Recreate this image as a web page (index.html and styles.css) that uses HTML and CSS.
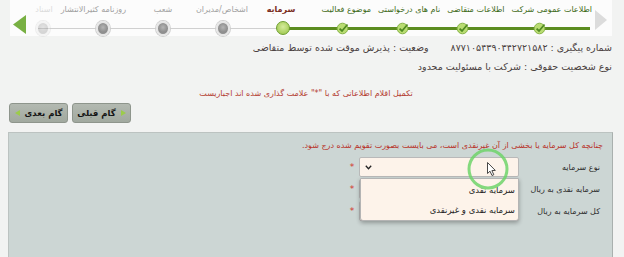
FILE: index.html
```html
<!DOCTYPE html>
<html lang="fa" dir="rtl">
<head>
<meta charset="utf-8">
<title>ثبت شرکت</title>
<link rel="stylesheet" href="styles.css">
</head>
<body>
<div class="wizard">
  <div class="step-labels">
    <span class="label done">اطلاعات عمومی شرکت</span>
    <span class="label done">اطلاعات متقاضی</span>
    <span class="label done">نام های درخواستی</span>
    <span class="label done">موضوع فعالیت</span>
    <div class="labels-rest">
      <span class="label current">سرمایه</span>
      <span class="label">اشخاص/مدیران</span>
      <span class="label">شعب</span>
      <span class="label">روزنامه کثیرالانتشار</span>
      <span class="label faded">اسناد</span>
    </div>
  </div>
  <div class="step-track">
    <span class="dot dot-check first"><svg width="14" height="14" viewBox="0 0 14 14"><circle cx="6.5" cy="7.5" r="5.3" fill="#b9dc72" stroke="#86b347" stroke-width="1"/><path d="M3.6 7.6 L6 10 L11.5 3.5" fill="none" stroke="#4f8a22" stroke-width="1.8"/></svg></span>
    <span class="dot dot-check"><svg width="14" height="14" viewBox="0 0 14 14"><circle cx="6.5" cy="7.5" r="5.3" fill="#b9dc72" stroke="#86b347" stroke-width="1"/><path d="M3.6 7.6 L6 10 L11.5 3.5" fill="none" stroke="#4f8a22" stroke-width="1.8"/></svg></span>
    <span class="dot dot-check"><svg width="14" height="14" viewBox="0 0 14 14"><circle cx="6.5" cy="7.5" r="5.3" fill="#b9dc72" stroke="#86b347" stroke-width="1"/><path d="M3.6 7.6 L6 10 L11.5 3.5" fill="none" stroke="#4f8a22" stroke-width="1.8"/></svg></span>
    <span class="dot dot-check"><svg width="14" height="14" viewBox="0 0 14 14"><circle cx="6.5" cy="7.5" r="5.3" fill="#b9dc72" stroke="#86b347" stroke-width="1"/><path d="M3.6 7.6 L6 10 L11.5 3.5" fill="none" stroke="#4f8a22" stroke-width="1.8"/></svg></span>
    <span class="dot dot-current"></span>
    <span class="dot dot-gray"></span>
    <span class="dot dot-gray"></span>
    <span class="dot dot-gray"></span>
    <span class="dot dot-gray faded"></span>
  </div>
  <div class="nav-next">
    <svg width="12" height="20" viewBox="0 0 12 20"><polygon points="0,0 12,10 0,20" fill="#dcdcdc"/></svg>
  </div>
  <div class="nav-prev">
    <svg width="13" height="19" viewBox="0 0 13 19"><polygon points="0,9.5 13,0 13,19" fill="#78b043"/></svg>
  </div>
</div>

<div class="info">
  <p class="info-line"><span>شماره پیگیری : ۸۷۷۱۰۵۴۳۹۰۳۴۲۷۲۱۵۸۲</span><span class="status">وضعیت : پذیرش موقت شده توسط متقاضی</span></p>
  <p class="info-line">نوع شخصیت حقوقی : شرکت با مسئولیت محدود</p>
  <p class="notice">تکمیل اقلام اطلاعاتی که با "*" علامت گذاری شده اند اجباریست</p>
</div>

<div class="actions">
  <button class="btn"><span class="tri tri-r"></span>گام قبلی</button>
  <button class="btn">گام بعدی<span class="tri tri-l"></span></button>
</div>

<div class="panel">
  <p class="warn">چنانچه کل سرمایه یا بخشی از آن غیرنقدی است، می بایست بصورت تقویم شده درج شود.</p>
  <div class="form">
    <label class="flabel">نوع سرمایه</label>
    <div class="select-wrap">
      <div class="select">
        <svg class="chev" width="7" height="5" viewBox="0 0 7 5"><path d="M0.8 0.8 L3.5 3.8 L6.2 0.8" fill="none" stroke="#222" stroke-width="1.3"/></svg>
      </div>
      <ul class="options">
        <li>سرمایه نقدی</li>
        <li>سرمایه نقدی و غیرنقدی</li>
      </ul>
      <svg class="focus-ring" width="44" height="44" viewBox="0 0 44 44"><circle cx="22" cy="22" r="19" fill="none" stroke="#6fd46a" stroke-opacity="0.85" stroke-width="3"/></svg>
      <svg class="cursor" width="10" height="15" viewBox="0 0 10 15"><path d="M0.5 0.5 L0.5 11.5 L3 9.2 L5 13.5 L6.8 12.7 L4.9 8.6 L8.3 8.4 Z" fill="#fff" stroke="#333" stroke-width="0.9"/></svg>
    </div>
    <span class="req">*</span>

    <label class="flabel">سرمایه نقدی به ریال</label>
    <div class="input"></div>
    <span class="req">*</span>

    <label class="flabel">کل سرمایه به ریال</label>
    <div class="input"></div>
    <span class="req">*</span>
  </div>
</div>
</body>
</html>
```

FILE: styles.css
```css
* { box-sizing: border-box; }
html, body { margin: 0; padding: 0; }
body {
  background: #f2f3f2;
  font-family: "DejaVu Sans", sans-serif;
  font-size: 9.5px;
  color: #4a3f3f;
  direction: rtl;
  overflow: hidden;
  height: 257px;
}

/* wizard */
.wizard {
  position: relative;
  height: 36px;
  margin: 0 12px 0 10px;
  background: #fcfcfc;
}
.step-labels {
  display: flex;
  height: 20px;
  padding-top: 4px;
  padding-right: 20px;
}
.labels-rest {
  margin-right: auto;
  display: grid;
  grid-template-columns: 66px 48px 74px 48px 68px;
}
.label {
  text-align: center;
  line-height: 12px;
  white-space: nowrap;
  font-size: 8px;
  color: #a0a0a0;
}
.label.done { color: #3c6a18; margin-left: 7px; }
.label.current { color: #7b2e1e; font-weight: bold; }
.faded { opacity: 0.35; }
.step-track {
  display: flex;
  gap: 46px;
  height: 16px;
  padding-right: 65px;
  align-items: center;
  background:
    linear-gradient(to right, transparent 28px, #d0d0d0 28px, #d0d0d0 274px, transparent 274px) 0 8px / 100% 1px no-repeat,
    linear-gradient(to right, transparent 274px, #5b8c1f 274px, #5b8c1f 580px, transparent 580px) 0 7px / 100% 3px no-repeat;
}
.dot {
  width: 14px;
  height: 14px;
  flex: none;
  display: flex;
  align-items: center;
  justify-content: center;
}
.dot.first { margin-left: 17px; }
.dot-gray::before {
  content: "";
  width: 11px;
  height: 11px;
  border-radius: 50%;
  background: radial-gradient(circle at 50% 40%, #b5b5b5 0, #8f8f8f 55%);
  border: 2px solid #e6e6e6;
  box-shadow: 0 0 0 1px #cfcfcf;
}
.dot-current::before {
  content: "";
  width: 12px;
  height: 12px;
  border-radius: 50%;
  background: radial-gradient(circle at 50% 40%, #d5eb9c 0, #a9cf5d 70%);
  border: 1.5px solid #6d9e30;
}
.nav-next { position: absolute; right: 5px; top: 10px; }
.nav-prev { position: absolute; left: 3px; top: 15px; }

/* info */
.info { padding: 0 12px 0 0; margin-top: 2px; }
.info-line {
  margin: 0;
  line-height: 19px;
  white-space: nowrap;
}
.status { margin-right: 22px; }
.notice {
  margin: 8px 0 0;
  line-height: 19px;
  text-align: center;
  color: #b23a30;
  font-size: 8px;
}

/* buttons */
.actions {
  display: flex;
  justify-content: flex-end;
  gap: 4px;
  padding-left: 9px;
  height: 20px;
}
.btn {
  display: flex;
  align-items: center;
  justify-content: center;
  gap: 5px;
  width: 59px;
  height: 20px;
  padding: 0;
  white-space: nowrap;
  border: 1px solid #8e958c;
  border-radius: 3px;
  background: linear-gradient(#b3b9b1, #a1a99f);
  font-family: inherit;
  font-size: 8.5px;
  font-weight: bold;
  color: #151515;
}
.tri { width: 0; height: 0; border-top: 3px solid transparent; border-bottom: 3px solid transparent; }
.tri-r { border-left: 5px solid #9ccc4a; }
.tri-l { border-right: 5px solid #9ccc4a; }

/* panel */
.panel {
  margin: 9px 11px 0 8px;
  height: 130px;
  border: 1px solid #bcc3c1;
  border-right-color: #a9b0ae;
  background: #ccd6d4;
  padding: 4px 9px 0 10px;
}
.warn {
  margin: 0;
  line-height: 18px;
  color: #b83229;
  font-size: 8px;
}
.form {
  margin-top: 1px;
  display: grid;
  grid-template-columns: 78px 160px 8px;
  grid-auto-rows: 22px;
  column-gap: 3px;
  align-items: center;
  padding-right: 3px;
}
.flabel { color: #2e2e2e; font-size: 8px; white-space: nowrap; }
.select-wrap { position: relative; height: 20px; }
.select, .input {
  height: 20px;
  background: #fdf3ea;
  border: 1px solid #b9b9b9;
  border-radius: 2px;
}
.select { display: flex; align-items: center; justify-content: flex-end; padding-left: 5px; }
.req { color: #d2332b; font-size: 9px; text-align: center; }
.options {
  position: absolute;
  top: 21px;
  right: 0;
  width: 159px;
  margin: 0;
  padding: 1px 0 0;
  list-style: none;
  background: #fdf3ea;
  border: 1px solid #b4b4b4;
  border-radius: 0 0 3px 3px;
  box-shadow: 0 2px 4px rgba(0,0,0,0.3);
  z-index: 3;
}
.options li {
  line-height: 20px;
  padding-right: 3px;
  font-size: 8.5px;
  color: #1c1c1c;
}
.focus-ring { position: absolute; left: 107px; top: -10px; z-index: 4; }
.cursor { position: absolute; left: 128px; top: 5px; z-index: 5; }
```
